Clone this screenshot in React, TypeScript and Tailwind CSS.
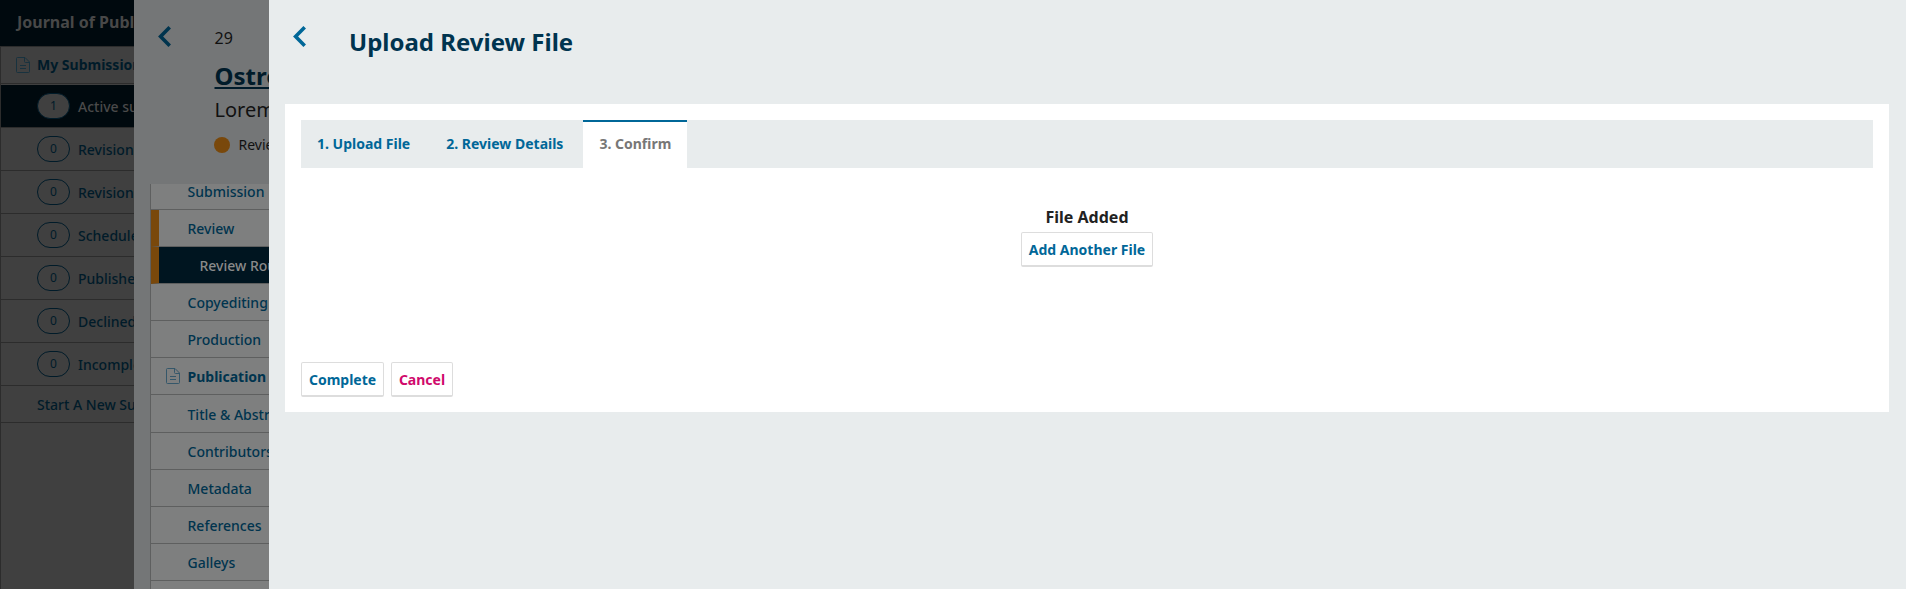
const folders = [
  'Revisions requested',
  'Revisions submitted',
  'Scheduled for publication',
  'Published',
  'Declined',
  'Incomplete submissions',
];

const publicationItems = ['Title & Abstract', 'Contributors', 'Metadata', 'References', 'Galleys'];

function FileIcon({ className }: { className: string }) {
  return (
    <svg className={className} viewBox="0 0 14 16" fill="none" stroke="currentColor">
      <path d="M1.5 0.5H9L13.5 5V14.5Q13.5 15.5 12.5 15.5H1.5Q0.5 15.5 0.5 14.5V1.5Q0.5 0.5 1.5 0.5Z" />
      <path d="M8.5 0.5V4.5Q8.5 5.5 9.5 5.5H13.5M4 8.5H10M4 11.5H10" />
    </svg>
  );
}

function BackIcon({ className }: { className: string }) {
  return (
    <svg className={className} viewBox="0 0 13 21" fill="none" stroke="currentColor" strokeWidth="3.6">
      <path d="M11.7 1.3L2.6 10.5L11.7 19.7" />
    </svg>
  );
}

function Dashboard() {
  return (
    <aside className="flex h-full w-[134px] shrink-0 flex-col overflow-hidden whitespace-nowrap bg-[#404040] text-[#001b29]">
      <header className="flex h-[46px] shrink-0 items-center bg-[#00090e] pb-[2px] pl-[17px] text-[16px] font-bold text-[#484848]">
        Journal of Public Knowledge
      </header>
      <nav className="flex grow flex-col border-l border-t border-[#2c2c2c] text-[14px] font-medium">
        <div className="flex h-[37px] shrink-0 items-center border-b border-[#2c2c2c] pl-[15px]">
          <FileIcon className="mr-[7px] h-4 w-[14px] shrink-0 text-[#18323f]" />
          <span className="pb-[2px] font-bold">My Submissions</span>
        </div>
        <div className="mt-px flex h-[43px] shrink-0 items-center border-b border-[#2c2c2c] bg-[#00090e] pl-[36px] text-[#4a4a4a]">
          <span className="mr-[8px] flex h-[26px] w-[33px] shrink-0 items-center justify-center rounded-full border border-[#001b29] bg-[#404040] pb-px text-[12px] font-normal text-[#001b29]">
            1
          </span>
          <span>Active submissions</span>
        </div>
        {folders.map((name) => (
          <div key={name} className="flex h-[43px] shrink-0 items-center border-b border-[#2c2c2c] pl-[36px]">
            <span className="mr-[8px] flex h-[26px] w-[33px] shrink-0 items-center justify-center rounded-full border border-[#001b29] pb-px text-[12px] font-normal">
              0
            </span>
            {name}
          </div>
        ))}
        <div className="flex h-[37px] shrink-0 items-center border-b border-[#2c2c2c] pl-[36px]">
          Start A New Submission
        </div>
      </nav>
    </aside>
  );
}

function MenuItem({ name }: { name: string }) {
  return (
    <div className="flex h-[37px] shrink-0 items-center border-b border-[#5e5f5f] pl-[36.5px]">{name}</div>
  );
}

function Workflow() {
  return (
    <section className="flex h-full w-[135px] shrink-0 flex-col overflow-hidden whitespace-nowrap bg-[#747677]">
      <header className="flex h-[184px] shrink-0 text-[#111111]">
        <BackIcon className="ml-[24px] mt-[26px] h-[21px] w-[13px] shrink-0 text-[#00344e]" />
        <div className="ml-[43px] flex flex-col">
          <span className="mt-[26px] pl-[0.5px] text-[16px] leading-6">29</span>
          <span className="mt-[10px] pl-[0.5px] text-[24px] font-bold leading-8 text-[#001b2a] underline decoration-2 underline-offset-2">
            Ostrom
          </span>
          <span className="mt-[2px] pl-[0.5px] text-[20px] leading-8">Lorem ipsum</span>
          <span className="mt-[8px] flex items-center text-[14px] leading-5">
            <span className="mr-[8.5px] size-4 shrink-0 rounded-full bg-[#79480b]" />
            <span className="pt-px">Review</span>
          </span>
        </div>
      </header>
      <nav className="ml-4 flex grow flex-col overflow-hidden border-l border-[#5e5f5f] bg-[#7e7f7f] text-[14px] font-medium text-[#00344e]">
        <div className="flex h-[26px] shrink-0 items-center border-b border-[#5e5f5f] pb-[11px] pl-[36.5px]">Submission</div>
        <div className="flex h-[37px] shrink-0 items-center border-b border-l-8 border-b-[#5e5f5f] border-l-[#79480b] pl-[28.5px]">
          Review
        </div>
        <div className="flex h-[37px] shrink-0 items-center border-b border-l-8 border-b-[#5e5f5f] border-l-[#79480b] bg-[#001520] pl-[40.5px] text-[#8a8a8a]">
          Review Round 1
        </div>
        <MenuItem name="Copyediting" />
        <MenuItem name="Production" />
        <div className="flex h-[37px] shrink-0 items-center border-b border-[#5e5f5f] pl-[15px]">
          <FileIcon className="mr-[7.5px] h-4 w-[14px] shrink-0 text-[#35576a]" />
          <span className="font-bold">Publication</span>
        </div>
        <div className="h-px shrink-0" />
        {publicationItems.map((name) => (
          <MenuItem key={name} name={name} />
        ))}
      </nav>
    </section>
  );
}

const buttonClass =
  'flex h-[35px] items-center justify-center rounded-[2px] border border-b-2 border-[#dddddd] bg-white text-[14px] font-bold';

function UploadDialog() {
  return (
    <main className="flex h-full min-w-0 grow flex-col bg-[#e8eced]">
      <header className="flex h-[104px] shrink-0">
        <BackIcon className="ml-[24px] mt-[26px] h-[21px] w-[13px] text-[#006798]" />
        <h1 className="ml-[43px] mt-[26px] text-[24px] font-bold leading-8 text-[#00344f]">Upload Review File</h1>
      </header>
      <section className="ml-4 mr-[17px] flex h-[308px] flex-col bg-white px-4 pb-[15px] pt-4">
        <div className="flex h-12 shrink-0 items-stretch bg-[#e8eced] text-[14px] font-bold text-[#006798]">
          <button className="border-t-2 border-transparent px-4 pb-[3px]">1. Upload File</button>
          <button className="ml-[4px] border-t-2 border-transparent px-4 pb-[3px]">2. Review Details</button>
          <button className="ml-[4px] border-t-2 border-[#006798] bg-white px-4 pb-[3px] text-[#777777]">3. Confirm</button>
        </div>
        <div className="mt-[37px] flex flex-col items-center">
          <h2 className="text-[16px] font-bold leading-6 text-[#222222]">File Added</h2>
          <button className={`${buttonClass} mt-[3px] w-[132px] text-[#006798]`}>Add Another File</button>
        </div>
        <div className="mt-auto flex gap-[7px]">
          <button className={`${buttonClass} w-[83px] text-[#006798]`}>Complete</button>
          <button className={`${buttonClass} w-[62px] text-[#d00a6c]`}>Cancel</button>
        </div>
      </section>
    </main>
  );
}

export default function App() {
  return (
    <div className="flex h-screen w-full overflow-hidden font-['Noto_Sans',sans-serif]">
      <Dashboard />
      <Workflow />
      <UploadDialog />
    </div>
  );
}
